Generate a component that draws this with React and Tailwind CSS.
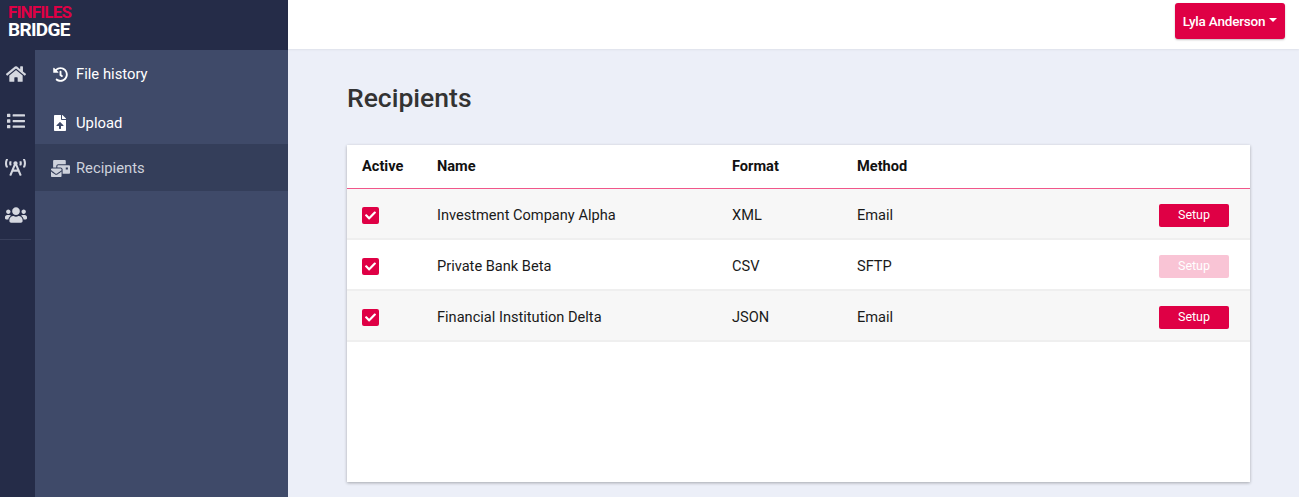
import { FaHome, FaList, FaBroadcastTower, FaUsers, FaHistory, FaFileUpload, FaMailBulk, FaCheck } from 'react-icons/fa'

const recipients = [
  { name: 'Investment Company Alpha', format: 'XML', method: 'Email', disabled: false },
  { name: 'Private Bank Beta', format: 'CSV', method: 'SFTP', disabled: true },
  { name: 'Financial Institution Delta', format: 'JSON', method: 'Email', disabled: false },
]

function App() {
  return (
    <div className="flex h-[497px] overflow-hidden bg-[#eceff8] font-['Roboto',sans-serif] text-[#212529]">
      {/* sidebar */}
      <aside className="flex w-[288px] shrink-0 flex-col bg-[#252c48]">
        <div className="h-[50px] pl-[8px] pt-[4px] font-bold">
          <div className="text-[17px] leading-[16px] tracking-[-0.85px] text-[#df0045]">FINFILES</div>
          <div className="text-[19px] leading-[19px] tracking-[-0.7px] text-white">BRIDGE</div>
        </div>
        <div className="flex flex-1">
          <nav className="w-[35px] shrink-0 pr-[4px] text-[#d5d8e0]">
            <div className="flex h-[47px] items-center justify-center"><FaHome size={20} /></div>
            <div className="flex h-[47px] items-center justify-center"><FaList size={18} /></div>
            <div className="flex h-[47px] items-center justify-center"><FaBroadcastTower size={21} /></div>
            <div className="flex h-[49px] items-center justify-center border-b border-[#383f5b]"><FaUsers size={22} /></div>
          </nav>
          <div className="flex-1 bg-[#3f4a69] text-[14.8px]">
            <div className="flex h-[48px] items-center pl-[9px] pt-[1px] text-white">
              <span className="flex w-[32px] justify-center"><FaHistory size={15} /></span>
              <span>File history</span>
            </div>
            <div className="flex h-[46px] items-center pl-[9px] pt-[4px] text-white">
              <span className="flex w-[32px] justify-center"><FaFileUpload size={16} /></span>
              <span>Upload</span>
            </div>
            <div className="flex h-[47px] items-center bg-[#343e5a] pl-[9px] pt-[2px] text-[#ced2dc]">
              <span className="flex w-[32px] justify-center"><FaMailBulk size={19} /></span>
              <span>Recipients</span>
            </div>
          </div>
        </div>
      </aside>

      <div className="flex min-w-0 flex-1 flex-col">
        {/* top bar */}
        <header className="flex h-[49px] shrink-0 items-center justify-end bg-white pr-[14px] pb-[7px] shadow-[0_1px_2px_rgba(0,0,0,0.06)]">
          <button className="flex h-[36px] w-[110px] items-center justify-center rounded-[3px] bg-[#df0045] text-[13.5px] font-medium tracking-[-0.2px] text-white shadow-[0_1px_2px_rgba(0,0,0,0.25)]">
            Lyla Anderson
            <span className="ml-[4px] mb-[2px] border-x-[4px] border-t-[4px] border-x-transparent border-t-white" />
          </button>
        </header>

        <main className="flex-1 pl-[59px] pr-[49px]">
          <h1 className="mt-[32px] h-[64px] text-[26.5px] font-medium leading-[34px] text-[#333]">Recipients</h1>

          <div className="h-[337px] bg-white shadow-[0_1px_3px_rgba(0,0,0,0.3)]">
            <div className="flex h-[44px] items-center border-b border-[#f1568a] text-[14.6px] font-bold text-[#111]">
              <div className="w-[90px] pl-[15px]">Active</div>
              <div className="w-[295px]">Name</div>
              <div className="w-[125px]">Format</div>
              <div>Method</div>
            </div>
            {recipients.map((r, i) => (
              <div
                key={r.name}
                className={`flex h-[51px] items-center border-b-2 border-[#efefef] pt-[3px] text-[14.6px] text-[#1a1a1a] ${i % 2 === 0 ? 'bg-[#f7f7f7]' : 'bg-white'}`}
              >
                <div className="w-[90px] pl-[15px]">
                  <div className="flex h-[17px] w-[17px] items-center justify-center rounded-[2px] bg-[#df0045] text-white">
                    <FaCheck size={11} />
                  </div>
                </div>
                <div className="w-[295px] pt-[2px]">{r.name}</div>
                <div className="w-[125px] pt-[2px]">{r.format}</div>
                <div className="flex-1 pt-[2px]">{r.method}</div>
                <button
                  className={`mr-[21px] h-[23px] w-[70px] rounded-[2px] pt-[1px] text-[12.5px] text-white ${r.disabled ? 'bg-[#f9c4d5]' : 'bg-[#df0045]'}`}
                >
                  Setup
                </button>
              </div>
            ))}
          </div>
        </main>
      </div>
    </div>
  )
}

export default App
